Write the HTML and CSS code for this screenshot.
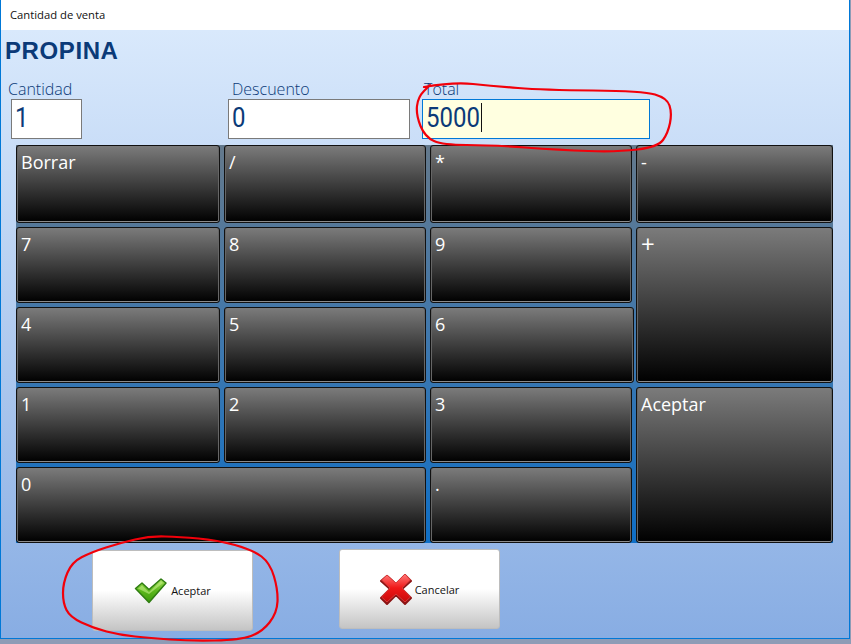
FILE: index.html
```html
<!DOCTYPE html>
<html lang="es">
<head>
  <meta charset="UTF-8">
  <meta name="viewport" content="width=device-width, initial-scale=1.0">
  <title>Cantidad de venta</title>
  <link rel="stylesheet" href="styles.css">
</head>
<body>
  <div class="window">
    <div class="titlebar">Cantidad de venta</div>
    <div class="content">
      <h1 class="heading">PROPINA</h1>

      <div class="fields">
        <div class="field field-qty">
          <label class="field-label">Cantidad</label>
          <div class="field-box"><span class="field-value">1</span></div>
        </div>
        <div class="field field-discount">
          <label class="field-label">Descuento</label>
          <div class="field-box"><span class="field-value">0</span></div>
        </div>
        <div class="field field-total">
          <label class="field-label">Total</label>
          <div class="field-box field-box-active"><span class="field-value">5000</span><span class="caret"></span></div>
        </div>
      </div>

      <div class="keypad">
        <button class="key">Borrar</button>
        <button class="key">/</button>
        <button class="key">*</button>
        <button class="key">-</button>
        <button class="key">7</button>
        <button class="key">8</button>
        <button class="key">9</button>
        <button class="key key-tall key-plus">+</button>
        <button class="key">4</button>
        <button class="key">5</button>
        <button class="key key-six">6</button>
        <button class="key">1</button>
        <button class="key">2</button>
        <button class="key">3</button>
        <button class="key key-tall">Aceptar</button>
        <button class="key key-double">0</button>
        <button class="key">.</button>
      </div>

      <div class="actions">
        <button class="action action-ok">
          <svg class="icon-check" width="34" height="26" viewBox="0 0 34 26">
            <defs>
              <linearGradient id="checkFill" x1="0" y1="0" x2="0" y2="1">
                <stop offset="0" stop-color="#a6e05a"/>
                <stop offset="0.5" stop-color="#5cb81c"/>
                <stop offset="1" stop-color="#3c9a0c"/>
              </linearGradient>
            </defs>
            <path d="M1.500 10.500 L8 5 L15 11.500 L27 1 L32 5 L15 24.500 Z" fill="url(#checkFill)" stroke="#2f7d12" stroke-width="1.500" stroke-linejoin="round"/>
            <path d="M4 10.500 L8 7.500 L15 14 L27 3 L29 5 L15 16 Z" fill="#c8f08c" opacity="0.55"/>
          </svg>
          <span>Aceptar</span>
        </button>
        <button class="action action-cancel">
          <svg class="icon-cross" width="32" height="34" viewBox="0 0 32 34">
            <defs>
              <linearGradient id="crossFill" x1="0" y1="0" x2="0" y2="1">
                <stop offset="0" stop-color="#ff7a7a"/>
                <stop offset="0.5" stop-color="#f01818"/>
                <stop offset="1" stop-color="#c80a0a"/>
              </linearGradient>
            </defs>
            <path d="M7 4 L16 12 L25 3 L31 9 L22 17 L31 26 L25 32 L16 23 L7 32 L1 26 L10 17 L1 9 Z" fill="#8c1414" stroke="#8c1414" stroke-width="2" stroke-linejoin="round"/>
            <path d="M7 3 L16 11 L25 2 L30.500 8 L22 16 L30.500 25 L25 30 L16 22 L7 30 L1.500 25 L10 16 L1.500 8 Z" fill="url(#crossFill)" stroke="#d83a3a" stroke-width="1" stroke-linejoin="round"/>
          </svg>
          <span>Cancelar</span>
        </button>
      </div>
    </div>
  </div>

  <!-- marcas a mano sobre la captura -->
  <svg class="marks" width="851" height="644" viewBox="0 0 851 644">
    <path d="M424 87 Q453 82 473 84 Q493 86 518 88 Q543 90 593 90.500 Q643 91 655 94.500 Q667 98 669.500 105.500 Q672 113 670 123 Q668 133 663 140 Q658 147 637.500 149.500 Q617 152 588.500 151 Q560 150 525 147.500 Q490 145 466.500 145 Q443 145 434 141 Q425 137 420.500 126 Q416 115 417 106 Q418 97 424 91 L430 85"/>
    <path d="M106 547.500 Q92 552 82 557 Q72 562 67.500 572.500 Q63 583 63 593 Q63 603 66.500 610 Q70 617 81.500 622.500 Q93 628 106.500 631.500 Q120 635 135 636.500 Q150 638 170 639.500 Q190 641 215 640.500 Q240 640 251 636 Q262 632 269.500 622.500 Q277 613 277.500 601.500 Q278 590 274 576.500 Q270 563 261.500 556.500 Q253 550 235 545 Q217 540 198.500 538.500 Q180 537 165 536.500 Q150 536 135 539.500 Q120 543 106 547.500 Z"/>
  </svg>
</body>
</html>
```

FILE: styles.css
```css
html, body {
  margin: 0;
  height: 100%;
}
body {
  position: relative;
  overflow: hidden;
  background-color: #8e9cb6;
  font-family: 'Open Sans', 'Liberation Sans', sans-serif;
}
.window {
  box-sizing: border-box;
  width: 850px;
  height: 639px;
  display: flex;
  flex-direction: column;
  border: 1px solid #0078d7;
  border-top: none;
}
.titlebar {
  height: 30px;
  flex-shrink: 0;
  background-color: #fff;
  padding-left: 9px;
  font-size: 11.25px;
  line-height: 30px;
  color: #111;
}
.content {
  flex: 1;
  background: linear-gradient(to bottom, #d9e9fc, #88ade3);
}
.heading {
  margin: 0;
  height: 41px;
  padding-left: 4px;
  font-family: 'Liberation Sans', sans-serif;
  font-size: 24px;
  font-weight: bold;
  letter-spacing: 0.6px;
  line-height: 41px;
  color: #0b3a78;
}
.fields {
  display: flex;
  height: 74px;
  padding-top: 10px;
  box-sizing: border-box;
}
.field-label {
  display: block;
  height: 18px;
  font-size: 16px;
  font-weight: 300;
  line-height: 16px;
  color: #0b3a78;
}
.field-box {
  box-sizing: border-box;
  height: 40px;
  padding-left: 3px;
  border: 1px solid #7a7a7a;
  background-color: #fff;
  font-family: Roboto, sans-serif;
  font-size: 24px;
  line-height: 37px;
  color: #0b3a78;
}
.field-value {
  display: inline-block;
  transform: scaleY(1.18);
}
.field-box-active {
  border-color: #0078d7;
  background-color: #ffffe0;
}
.caret {
  display: inline-block;
  width: 1px;
  height: 29px;
  margin-left: 1px;
  vertical-align: -6px;
  background-color: #111;
}
.field-qty {
  width: 74px;
  margin-left: 7px;
}
.field-qty .field-box {
  width: 71px;
  margin-left: 3px;
}
.field-discount {
  width: 182px;
  margin-left: 146px;
}
.field-discount .field-label {
  margin-left: 4px;
}
.field-total {
  width: 228px;
  margin-left: 12px;
}
.field-total .field-label {
  margin-left: 2px;
}
.keypad {
  display: grid;
  grid-template-columns: 204px 202px 202px 197px;
  grid-template-rows: 78px 76px 76px 76px 76px;
  gap: 4px;
  width: 817px;
  margin-left: 15px;
  background: linear-gradient(to bottom, #64798c, #3f78ae 50%, #0f6fc6);
}
.key {
  box-sizing: border-box;
  display: flex;
  align-items: flex-start;
  padding: 4px 0 0 4px;
  border: 1px solid #111;
  border-radius: 3px;
  background: linear-gradient(to bottom, #7b7b7b, #000);
  box-shadow: inset 0 -1px 0 #8c8c8c, inset 1px 0 0 #666, inset -1px 0 0 #666;
  font-family: 'Open Sans', sans-serif;
  font-size: 18px;
  line-height: 24px;
  color: #fff;
  text-align: left;
}
.key-tall {
  grid-row: span 2;
}
.key-double {
  grid-column: span 2;
}
.key-six {
  margin-right: -2px;
}
.key-plus {
  font-size: 24px;
}
.actions {
  display: flex;
  align-items: flex-start;
  gap: 86px;
  padding: 7px 0 0 91px;
}
.action {
  box-sizing: border-box;
  display: flex;
  align-items: center;
  justify-content: center;
  width: 161px;
  height: 81px;
  padding: 0;
  border: 1px solid #bdbdbd;
  border-radius: 3px;
  background: linear-gradient(to bottom, #fff 50%, #c4c4c4);
  font-family: 'Open Sans', sans-serif;
  font-size: 11px;
  color: #111;
}
.action-cancel {
  height: 80px;
  margin-top: -1px;
}
.icon-check {
  margin-right: 3px;
}
.icon-cross {
  margin-right: 3px;
}
.marks {
  position: absolute;
  top: 0;
  left: 0;
  pointer-events: none;
}
.marks path {
  fill: none;
  stroke: #f2000a;
  stroke-width: 2.2;
  stroke-linecap: round;
}
```
